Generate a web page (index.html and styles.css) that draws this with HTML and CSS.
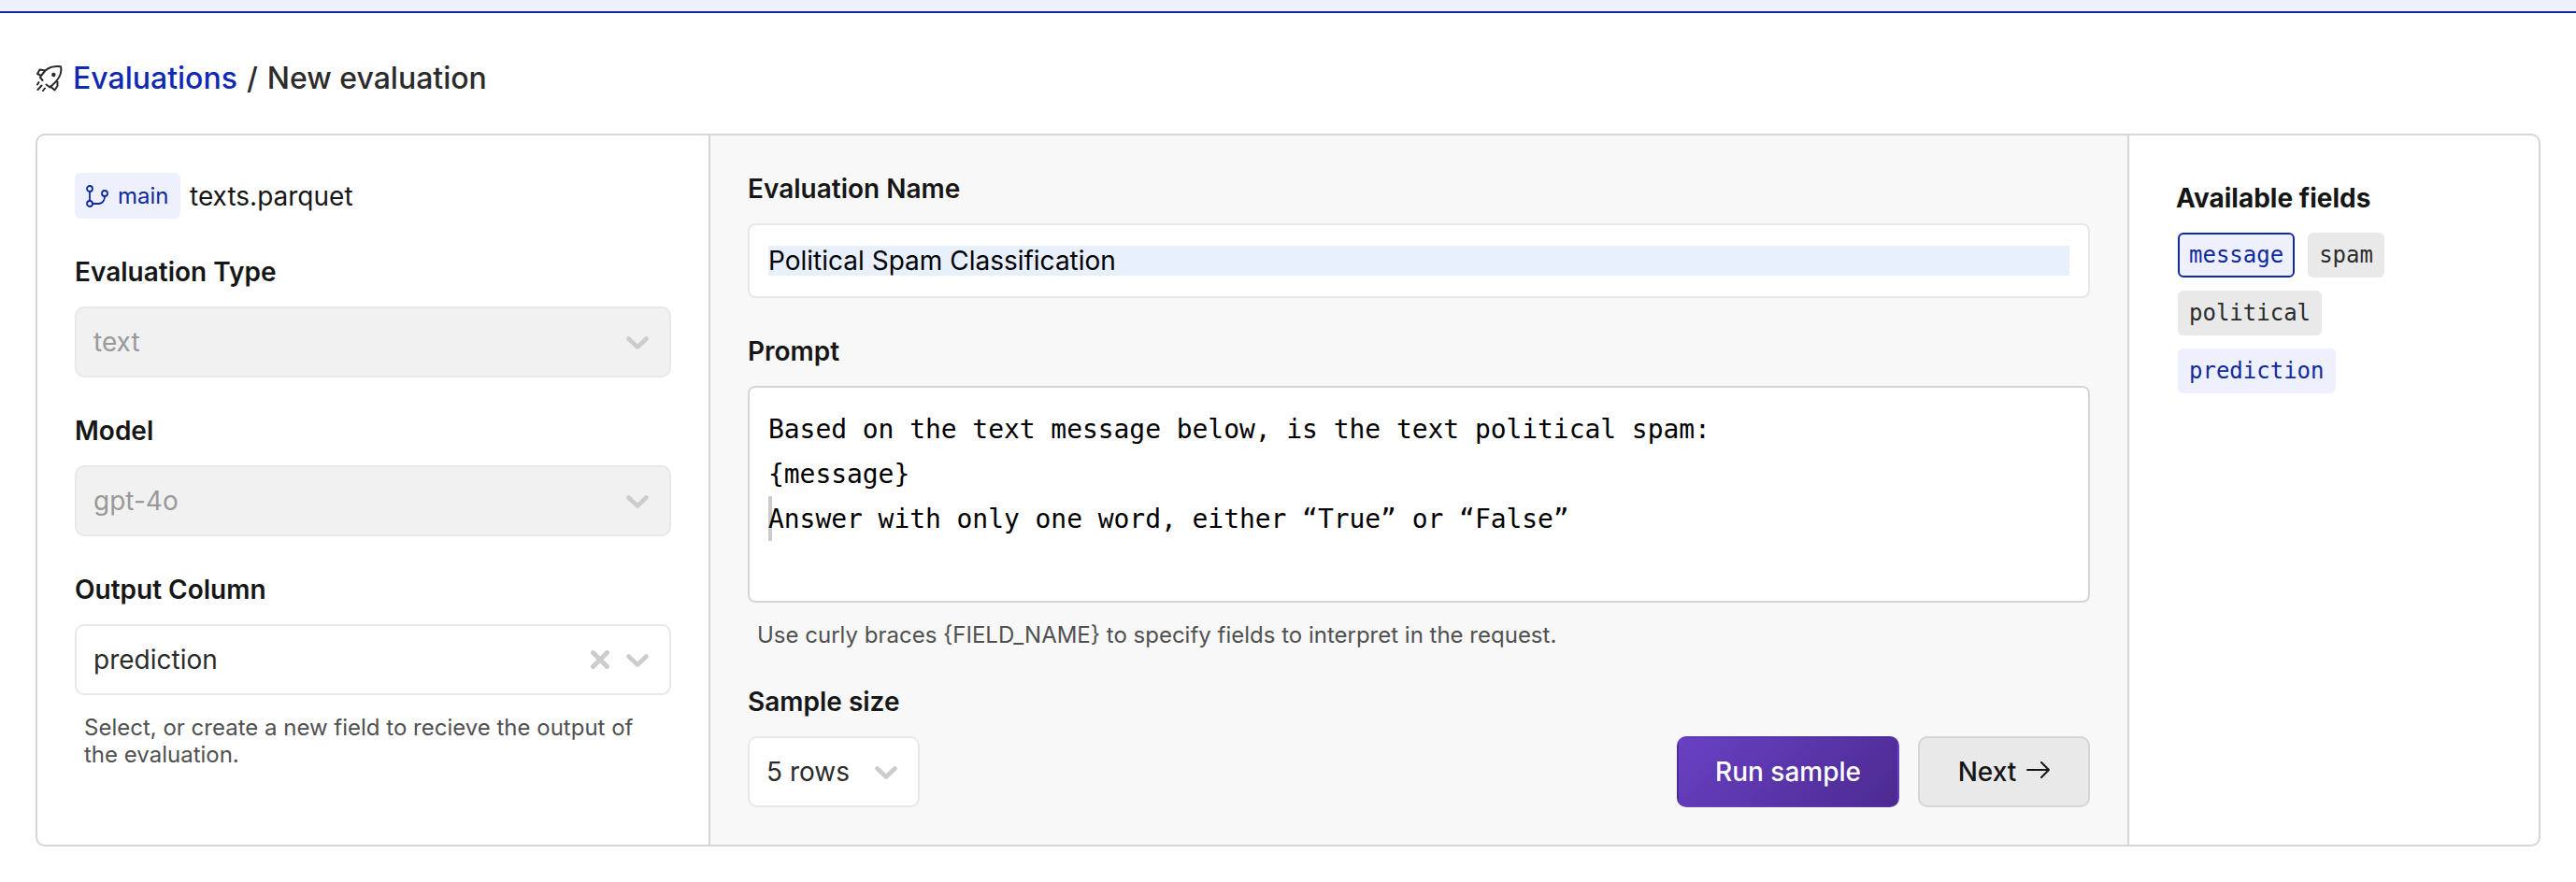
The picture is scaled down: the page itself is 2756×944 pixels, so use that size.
FILE: index.html
```html
<!DOCTYPE html>
<html lang="en">
<head>
<meta charset="utf-8">
<title>New evaluation</title>
<link rel="stylesheet" href="styles.css">
</head>
<body>
<div class="topbar"></div>
<main class="page">
  <h1 class="crumbs">
    <svg class="rocket" viewBox="0 0 28 28"><path d="M9.500 5.500C14 1.500 20 .5 26 1.200C28 9 24 15 16.500 21.500L14.500 23.500L10.500 20.500M9.500 5.500L3.500 4.500L1 9L5 11L4 13L6.500 16M9.500 5.500L5 11M22.500 17.500L22.500 22L19.500 26.500L15 22.500L17 21M1 20.500L2.500 18M1.500 26L5.500 21.500M7 27L9 24.500"/><circle cx="18.300" cy="10" r="2.200"/></svg>
    <a class="crumb-link">Evaluations</a><span class="crumb-sep">/</span><span class="crumb-current">New evaluation</span>
  </h1>
  <div class="card">
    <section class="side">
      <div class="source">
        <span class="branch"><svg class="branch-icon" viewBox="0 0 24 24"><circle cx="4" cy="4" r="3"/><circle cx="4" cy="20" r="3"/><circle cx="20" cy="9" r="3"/><path d="M4 7V17M7 20H14Q20 19 20 12"/></svg>main</span>
        <span class="file">texts.parquet</span>
      </div>
      <label class="label">Evaluation Type</label>
      <div class="select disabled"><span class="value">text</span><svg class="chev" viewBox="0 0 24 14"><path d="M2.500 2.500L12 11.500L21.500 2.500"/></svg></div>
      <label class="label">Model</label>
      <div class="select disabled"><span class="value">gpt-4o</span><svg class="chev" viewBox="0 0 24 14"><path d="M2.500 2.500L12 11.500L21.500 2.500"/></svg></div>
      <label class="label">Output Column</label>
      <div class="select"><span class="value">prediction</span><svg class="clear" viewBox="0 0 20 20"><path d="M2.500 2.500L17.500 17.500M17.500 2.500L2.500 17.500"/></svg><svg class="chev" viewBox="0 0 24 14"><path d="M2.500 2.500L12 11.500L21.500 2.500"/></svg></div>
      <p class="help">Select, or create a new field to recieve the output of the evaluation.</p>
    </section>
    <section class="main">
      <label class="label">Evaluation Name</label>
      <div class="input"><span class="autofill">Political Spam Classification</span></div>
      <label class="label">Prompt</label>
      <div class="prompt"><div>Based on the text message below, is the text political spam:</div><div>{message}</div><div class="caret-line">Answer with only one word, either “True” or “False”</div></div>
      <p class="help help-prompt">Use curly braces {FIELD_NAME} to specify fields to interpret in the request.</p>
      <label class="label">Sample size</label>
      <div class="actions">
        <div class="select rows"><span class="value">5 rows</span><svg class="chev" viewBox="0 0 24 14"><path d="M2.500 2.500L12 11.500L21.500 2.500"/></svg></div>
        <button class="btn primary">Run sample</button>
        <button class="btn next">Next<svg class="arrow" viewBox="0 0 25 18"><path d="M1 9H24M16 1L24 9L16 17"/></svg></button>
      </div>
    </section>
    <aside class="fields">
      <h2 class="fields-title">Available fields</h2>
      <div class="tags">
        <span class="tag blue active">message</span><span class="tag">spam</span><span class="tag">political</span><span class="tag blue">prediction</span>
      </div>
    </aside>
  </div>
</main>
</body>
</html>
```
FILE: styles.css
```css
* { box-sizing: border-box; }
body { margin: 0; background: #fff; color: #161616; font-family: Inter, "Liberation Sans", sans-serif; font-size: 28px; }
svg { fill: none; stroke: currentColor; stroke-linecap: round; stroke-linejoin: round; flex: none; }
h1, h2, p { margin: 0; }
.topbar { height: 14px; background: #eef0fd; border-bottom: 2px solid #0f2a9e; }
.page { padding: 49px 38px 0; }
.crumbs { display: flex; align-items: center; height: 40px; font-size: 32px; font-weight: 500; color: #2b2b2b; margin-bottom: 40px; white-space: nowrap; }
.rocket { width: 28px; height: 28px; margin: 2px 11px 0 1px; stroke-width: 2; }
.rocket circle { fill: currentColor; stroke: none; }
.crumb-link { color: #0f2ab0; }
.crumb-sep { margin: 0 10px; }
.card { display: grid; grid-template-columns: 720px 1fr 438px; height: 763px; border: 2px solid #d5d5d5; border-radius: 10px; overflow: hidden; }
.side { padding: 40px; border-right: 2px solid #d5d5d5; }
.source { display: flex; align-items: center; height: 49px; margin-bottom: 35px; gap: 10px; }
.branch { display: flex; align-items: center; gap: 10px; height: 49px; width: 113px; padding: 0 0 0 12px; border-radius: 6px; background: #eef0fd; color: #0f2a9e; font-size: 24px; }
.branch-icon { width: 24px; height: 24px; stroke-width: 1.8; }
.label { display: block; height: 59px; line-height: 44px; font-weight: 600; }
.select { display: flex; align-items: center; height: 76px; padding: 0 22px 0 18px; border: 2px solid #e8e8e8; border-radius: 10px; background: #fff; color: #2b2b2b; margin-bottom: 35px; }
.select.disabled { background: #f1f1f1; color: #999; }
.value { flex: 1; }
.chev { width: 24px; height: 14px; color: #ccc; stroke-width: 4.5; margin-top: 2px; }
.clear { width: 20px; height: 20px; color: #ccc; stroke-width: 5; margin-right: 18px; }
.side .help { margin-top: -15px; }
.help { padding: 0 10px; font-size: 24px; line-height: 29px; color: #505050; }
.main { padding: 35px 40px 0; background: #f8f8f8; border-right: 2px solid #d5d5d5; }
.input { height: 80px; padding: 22px 20px; border: 2px solid #e8e8e8; border-radius: 8px; background: #fff; margin-bottom: 35px; color: #000; }
.autofill { display: block; height: 32px; line-height: 32px; background: #e8f0fe; }
.prompt { position: relative; z-index: 0; height: 232px; padding: 21px 20px; border: 2px solid #d5d5d5; border-radius: 8px; background: #fff; color: #000; font: 28px/48px "DejaVu Sans Mono", monospace; letter-spacing: -0.06px; margin-bottom: 20px; white-space: nowrap; }
.caret-line { position: relative; }
.caret-line::before { content: ""; position: absolute; left: 0; top: -1px; width: 4px; height: 48px; background: #ccc; z-index: -1; }
.help-prompt { margin-bottom: 35px; }
.actions { display: flex; gap: 20px; }
.actions .select { width: 184px; margin: 0 auto 0 0; }
.btn { display: flex; align-items: center; justify-content: center; height: 76px; padding: 0; font: 500 28px Inter, sans-serif; border-radius: 10px; border: 2px solid #d5d5d5; }
.primary { width: 238px; color: #fff; border-color: transparent; background: linear-gradient(135deg, #6941c4, #4b2a90); }
.next { width: 184px; color: #161616; background: #e9e9e9; gap: 11px; }
.arrow { width: 25px; height: 18px; stroke-width: 2; margin-top: -4px; }
.fields { padding: 45px 40px 0 50px; }
.fields-title { font-size: 28px; font-weight: 700; line-height: 44px; margin-bottom: 15px; }
.tags { display: flex; flex-wrap: wrap; gap: 14px; width: 240px; margin-left: 2px; }
.tag { height: 48px; padding: 0 12px; line-height: 48px; border-radius: 6px; background: #e9e9e9; color: #2b2b2b; font-family: "DejaVu Sans Mono", monospace; font-size: 24px; }
.tag.blue { background: #eef0fd; color: #0f2a9e; }
.tag.active { border: 2px solid #0f2a9e; padding: 0 10px; line-height: 44px; }
```
